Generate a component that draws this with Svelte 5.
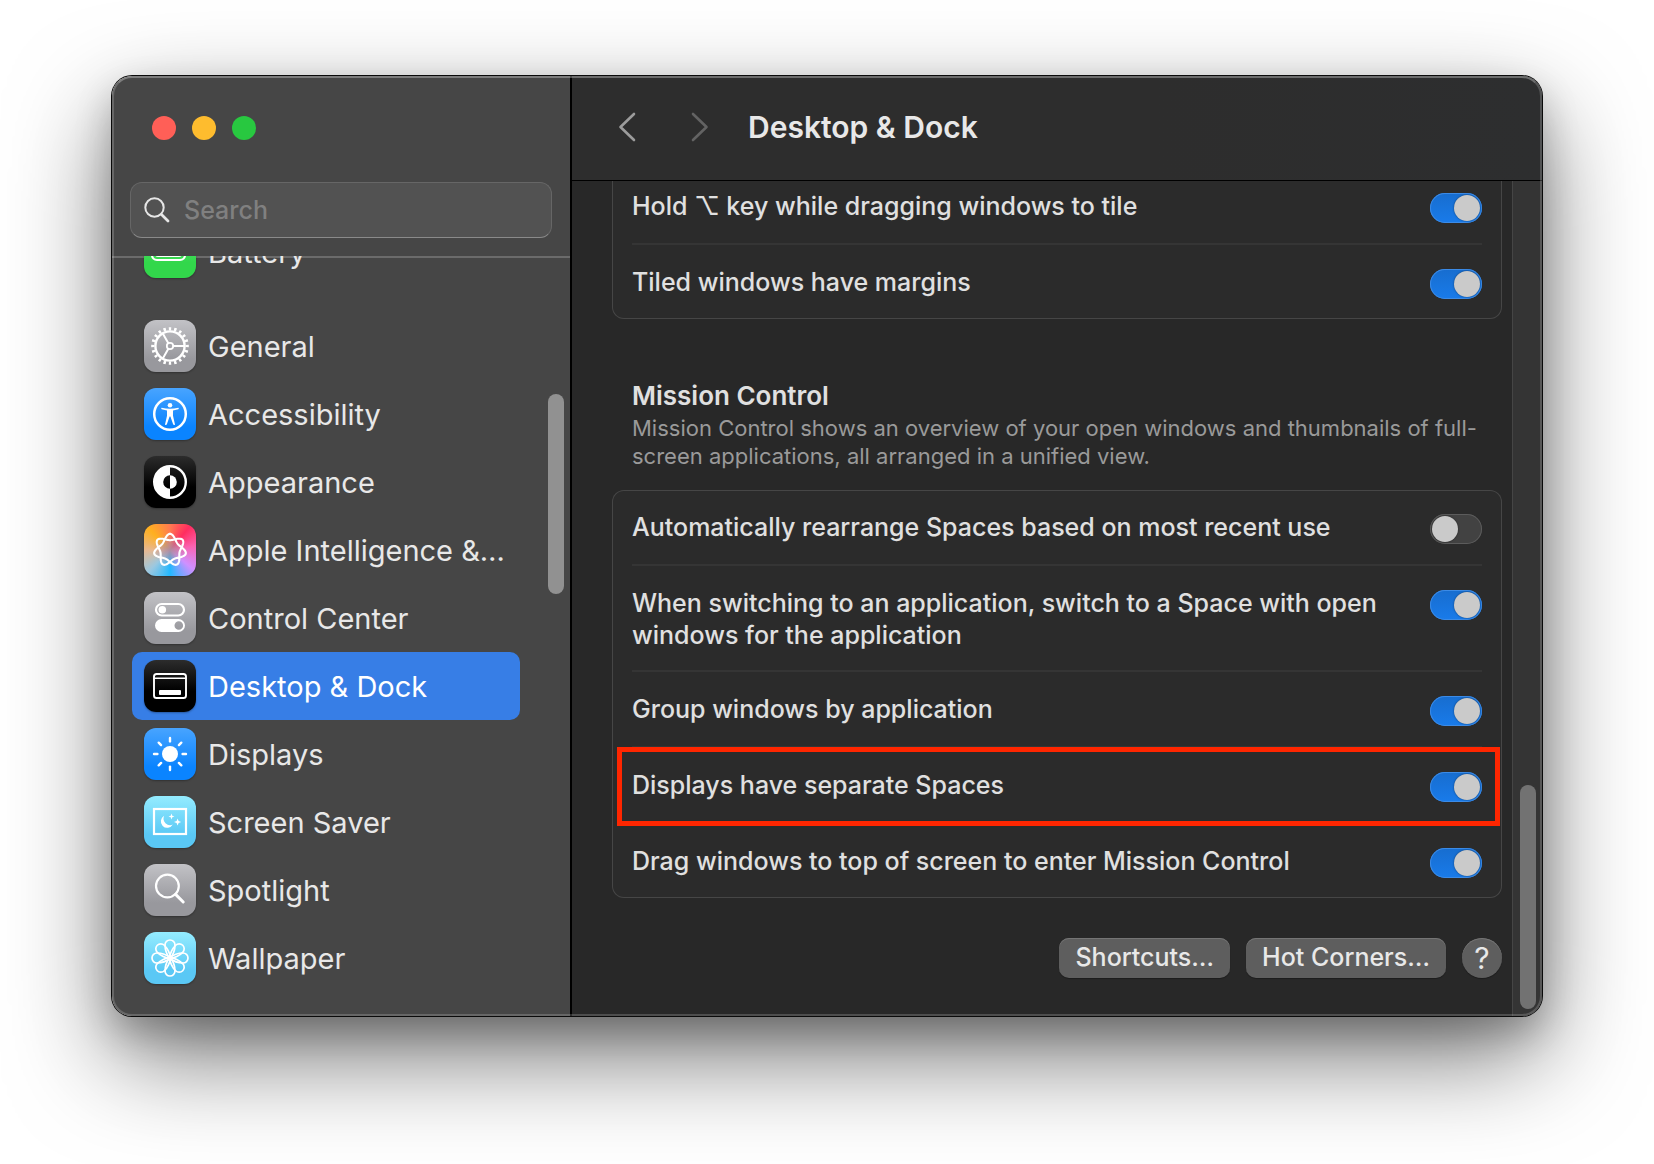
<script>
  let search = "";
  let selected = "dock";

  const sidebar = [
    { id: "battery", label: "Battery", tint: "green" },
    { id: "general", label: "General", tint: "gray", spaced: true },
    { id: "accessibility", label: "Accessibility", tint: "blue" },
    { id: "appearance", label: "Appearance", tint: "black" },
    { id: "siri", label: "Apple Intelligence &…", tint: "rainbow" },
    { id: "control", label: "Control Center", tint: "gray" },
    { id: "dock", label: "Desktop & Dock", tint: "black" },
    { id: "displays", label: "Displays", tint: "blue" },
    { id: "saver", label: "Screen Saver", tint: "cyan" },
    { id: "spotlight", label: "Spotlight", tint: "gray" },
    { id: "wallpaper", label: "Wallpaper", tint: "cyan" },
  ];

  let tiling = [
    { id: "option-tile", label: "Hold ⌥ key while dragging windows to tile", on: true },
    { id: "margins", label: "Tiled windows have margins", on: true },
  ];

  let mission = [
    { id: "rearrange", label: "Automatically rearrange Spaces based on most recent use", on: false },
    { id: "switching", label: "When switching to an application, switch to a Space with open windows for the application", on: true },
    { id: "group", label: "Group windows by application", on: true },
    { id: "separate", label: "Displays have separate Spaces", on: true, marked: true },
    { id: "drag", label: "Drag windows to top of screen to enter Mission Control", on: true },
  ];

  const petals = [0, 45, 90, 135, 180, 225, 270, 315];

  // seven lobed knot that runs twice round the centre
  function knot() {
    const points = [];
    for (let i = 0; i < 210; i++) {
      const t = (i / 210) * Math.PI * 2;
      const r = 13 + 3.2 * Math.cos(7 * t);
      const a = 2 * t - Math.PI / 2 - 0.1 * Math.sin(7 * t);
      points.push((26 + r * Math.cos(a)).toFixed(2) + " " + (26 + r * Math.sin(a)).toFixed(2));
    }
    return "M" + points.join("L") + "Z";
  }
</script>

<div class="window">
  <aside>
    <div class="lights">
      <button class="light close" aria-label="Close"></button>
      <button class="light minimize" aria-label="Minimize"></button>
      <button class="light zoom" aria-label="Zoom"></button>
    </div>

    <label class="search">
      <svg viewBox="0 0 26 26" aria-hidden="true">
        <circle cx="10.5" cy="10.5" r="9.2" />
        <path d="M17.5 17.5L24 24" stroke-width="2.8" />
      </svg>
      <input type="text" placeholder="Search" aria-label="Search" bind:value={search} />
    </label>

    <nav>
      {#each sidebar as item}
        <a
          href="#{item.id}"
          class:selected={selected === item.id}
          class:spaced={item.spaced}
          on:click={() => (selected = item.id)}
        >
          <svg class="icon {item.tint}" viewBox="0 0 52 52" aria-hidden="true">
            {#if item.id === "battery"}
              <rect x="8" y="17" width="33" height="17" rx="5" />
              <rect class="fill" x="11" y="20" width="27" height="11" rx="3" />
              <path d="M44 23v5" />
            {:else if item.id === "general"}
              <circle cx="26" cy="26" r="14.6" stroke-width="2.4" />
              <circle cx="26" cy="26" r="17.2" stroke-width="3.2" pathLength="40" stroke-dasharray="0.9 1.1" stroke-dashoffset="0.45" stroke-linecap="butt" />
              <circle cx="26" cy="26" r="3.2" stroke-width="1.8" />
              <path d="M29.5 26H40M24.2 23L18.8 13.6M24.2 29L18.8 38.4" stroke-width="2" />
            {:else if item.id === "accessibility"}
              <circle cx="26" cy="26" r="15.8" stroke-width="2.5" />
              <circle class="fill" cx="26" cy="17.2" r="2.3" />
              <path class="fill" d="M17.6 19.8q8.4 2 16.8 0q.9.7 0 1.4l-5.4 1.3v5.2l2 8.7q-.8 1.2-1.8.2l-2.8-8.2h-.8l-2.8 8.2q-1 1-1.8-.2l2-8.7v-5.2l-5.4-1.3q-.9-.7 0-1.4z" />
            {:else if item.id === "appearance"}
              <circle cx="26" cy="26" r="15.8" stroke-width="2.4" />
              <path class="fill" d="M26 10a16 16 0 0 0 0 32v-9.2a6.8 6.8 0 0 1 0-13.6z" />
              <path class="fill" d="M26 19.2a6.8 6.8 0 0 1 0 13.6z" />
            {:else if item.id === "siri"}
              <path d={knot()} stroke-width="2.1" />
            {:else if item.id === "control"}
              <rect x="12" y="12" width="28" height="11.5" rx="5.7" />
              <circle class="fill" cx="18.3" cy="17.7" r="3.8" />
              <path class="fill" fill-rule="evenodd" d="M17.5 27h17a6.5 6.5 0 0 1 0 13h-17a6.5 6.5 0 0 1 0-13zM34.8 29.2a4.3 4.3 0 1 0 0 8.6a4.3 4.3 0 1 0 0-8.6z" />
            {:else if item.id === "dock"}
              <rect x="10" y="14" width="32" height="24" rx="2.6" stroke-width="1.9" />
              <path d="M10 18.2h32" stroke-width="1.6" />
              <rect class="fill" x="15" y="30" width="22" height="5" rx="1" />
            {:else if item.id === "displays"}
              <circle class="fill" cx="26" cy="26" r="8" />
              {#each petals as angle}
                <path d="M26 10v3.4" stroke-width="2.4" transform="rotate({angle} 26 26)" />
              {/each}
            {:else if item.id === "saver"}
              <rect x="10" y="13" width="32" height="25" />
              <path class="fill" d="M20.2 19.8A6.4 6.4 0 1 0 28.8 28.6A6.6 6.6 0 0 1 20.2 19.8z" />
              <path class="fill" d="M27.5 17.5l.8 2.2 2.2.8-2.2.8-.8 2.2-.8-2.2-2.2-.8 2.2-.8zM33.6 22.4l1 2.6 2.6 1-2.6 1-1 2.6-1-2.6-2.6-1 2.6-1z" />
            {:else if item.id === "spotlight"}
              <circle cx="23.4" cy="22" r="11.4" />
              <path d="M31.6 30.4l7.6 7.6" stroke-width="3" />
            {:else if item.id === "wallpaper"}
              {#each petals as angle}
                <path d="M26 27C23 23 21 17.5 21 13A5 5 0 0 1 31 13C31 17.5 29 23 26 27Z" stroke-width="1.7" transform="rotate({angle} 26 26)" />
              {/each}
            {/if}
          </svg>
          <span>{item.label}</span>
        </a>
      {/each}
    </nav>
    <div class="thumb side-thumb"></div>
  </aside>

  <main>
    <header>
      <button class="arrow" aria-label="Back">
        <svg viewBox="0 0 18 30" aria-hidden="true"><path d="M16 2L2.5 15L16 28" /></svg>
      </button>
      <button class="arrow forward" aria-label="Forward" disabled>
        <svg viewBox="0 0 18 30" aria-hidden="true"><path d="M2 2L15.5 15L2 28" /></svg>
      </button>
      <h1>Desktop &amp; Dock</h1>
    </header>

    <div class="body">
      <div class="content">
        <section class="card">
          {#each tiling as row}
            <div class="row">
              <label for={row.id}>{row.label}</label>
              <input id={row.id} type="checkbox" role="switch" bind:checked={row.on} />
            </div>
          {/each}
        </section>

        <div class="intro">
          <h2>Mission Control</h2>
          <p>Mission Control shows an overview of your open windows and thumbnails of full-screen applications, all arranged in a unified view.</p>
        </div>

        <section class="card">
          {#each mission as row}
            <div class="row" class:marked={row.marked}>
              <label for={row.id}>{row.label}</label>
              <input id={row.id} type="checkbox" role="switch" bind:checked={row.on} />
            </div>
          {/each}
        </section>

        <div class="actions">
          <button>Shortcuts…</button>
          <button>Hot Corners…</button>
          <button class="help" aria-label="Help">?</button>
        </div>
      </div>
      <div class="track">
        <div class="thumb"></div>
      </div>
    </div>
  </main>
</div>

<style>
:global(body) {
  background: #fff;
}

.window {
  position: relative;
  display: flex;
  box-sizing: border-box;
  height: calc(100vh - 224px);
  margin: 76px 112px 148px;
  border-radius: 20px;
  color: #e0e0e0;
  font-family: Inter, "DejaVu Sans", sans-serif;
  box-shadow: 0 0 0 1px #0a0a0a, 0 40px 100px rgba(0, 0, 0, 0.55), 0 16px 36px rgba(0, 0, 0, 0.22);
}

/* light rim on top of everything */
.window::after {
  content: "";
  position: absolute;
  inset: 0;
  border: 2px solid rgba(255, 255, 255, 0.18);
  border-top-color: rgba(255, 255, 255, 0.3);
  border-radius: 20px;
  pointer-events: none;
}

button {
  padding: 0;
  border: none;
  background: none;
  color: inherit;
  font: inherit;
}

/* Sidebar */
aside {
  position: relative;
  display: flex;
  flex-direction: column;
  flex: 0 0 458px;
  min-width: 0;
  min-height: 0;
  background: #464646;
  border-right: 2px solid #000;
  border-radius: 20px 0 0 20px;
}

.lights {
  display: flex;
  gap: 16px;
  padding: 40px 40px 42px;
}

.light {
  width: 24px;
  height: 24px;
  border-radius: 50%;
}

.close { background: #ff5f57; }
.minimize { background: #febc2e; }
.zoom { background: #28c840; }

.search {
  display: flex;
  align-items: center;
  gap: 14px;
  box-sizing: border-box;
  height: 56px;
  margin: 0 18px 18px;
  padding: 0 13px;
  border: 1px solid #666;
  border-bottom-color: #8a8a8a;
  border-radius: 12px;
  background: #525252;
}

.search svg {
  flex: none;
  width: 26px;
  height: 26px;
  fill: none;
  stroke: #e6e6e6;
  stroke-width: 2;
  stroke-linecap: round;
}

.search input {
  flex: 1;
  min-width: 0;
  padding: 0;
  border: none;
  outline: none;
  background: none;
  color: #e6e6e6;
  font: 500 25px Inter, sans-serif;
}

.search input::placeholder {
  color: #808080;
}

nav {
  display: flex;
  flex: 1;
  flex-direction: column;
  justify-content: flex-end;
  min-height: 0;
  padding: 0 50px 24px 20px;
  overflow: hidden;
  box-shadow: inset 0 2px #6b6b6b;
}

nav a {
  display: flex;
  flex: none;
  align-items: center;
  gap: 12px;
  height: 68px;
  padding: 0 12px;
  border-radius: 10px;
  color: #e8e8e8;
  font-size: 29px;
  text-decoration: none;
  white-space: nowrap;
}

nav a.spaced {
  margin-top: 26px;
}

nav a.selected {
  background: #377ee6;
  color: #fff;
}

.icon {
  flex: none;
  width: 52px;
  height: 52px;
  border-radius: 12px;
  box-shadow: 0 1px 2px rgba(0, 0, 0, 0.3);
  fill: none;
  stroke: #fff;
  stroke-width: 2.2;
  stroke-linecap: round;
}

.icon .fill {
  fill: #fff;
  stroke: none;
}

.green { background: linear-gradient(#66e577, #32d74b 70%); }
.gray { background: linear-gradient(#c2c2c6, #98989d 75%); }
.blue { background: linear-gradient(#48a4ff, #0a84ff 75%); }
.black { background: linear-gradient(#2c2c2c, #000 60%); }
.cyan { background: linear-gradient(#94ecff, #5ac8f5 75%); }

.rainbow {
  background:
    radial-gradient(circle at 50% 50%, #b08ca0 0, rgba(176, 140, 160, 0) 45%),
    conic-gradient(from 0deg at 50% 50%, #ff7a50, #ff2d60 40deg, #fb62b0 80deg, #cf90ff 130deg, #22b8ff 180deg, #9cc8e0 225deg, #e8b890 270deg, #ffb020 315deg, #ff7a50);
}

.thumb {
  width: 16px;
  border-radius: 8px;
  background: #727272;
}

.side-thumb {
  position: absolute;
  top: 318px;
  right: 6px;
  height: 200px;
  background: #919191;
}

/* Detail pane */
main {
  display: flex;
  flex: 1;
  flex-direction: column;
  min-width: 0;
  background: #282828;
  border-radius: 0 20px 20px 0;
}

header {
  display: flex;
  flex: none;
  align-items: center;
  box-sizing: border-box;
  height: 105px;
  padding: 0 46px 2px;
  border-bottom: 1px solid #000;
  border-top-right-radius: 20px;
  background: linear-gradient(90deg, #2d2d2d 60%, #2d2e2f);
}

.arrow {
  width: 18px;
  height: 30px;
  margin-right: 55px;
}

.arrow.forward {
  margin-right: 39px;
}

.arrow svg {
  display: block;
  fill: none;
  stroke: #9c9c9c;
  stroke-width: 2.6;
  stroke-linecap: round;
  stroke-linejoin: round;
}

.arrow.forward svg {
  stroke: #636363;
}

h1 {
  margin: 0;
  color: #e8e8e8;
  font-size: 30px;
  font-weight: 600;
}

.body {
  display: flex;
  flex: 1;
  min-height: 0;
}

.content {
  display: flex;
  flex: 1;
  flex-direction: column;
  justify-content: flex-end;
  min-width: 0;
  padding: 0 10px 38px 40px;
  overflow: hidden;
}

.card {
  flex: none;
  padding: 0 20px;
  border-radius: 12px;
  background: #2b2b2b;
  box-shadow: inset 0 0 0 1px #464646;
}

.row {
  position: relative;
  display: flex;
  align-items: flex-start;
  justify-content: space-between;
  gap: 40px;
  box-sizing: border-box;
  min-height: 74px;
  padding: 21px 0 19px;
}

.row + .row {
  min-height: 76px;
  border-top: 2px solid #353535;
}

.row label {
  font-size: 25px;
  font-weight: 500;
  line-height: 32px;
}

.row.marked::before {
  content: "";
  position: absolute;
  z-index: 1;
  inset: -1px -18px -4px -15px;
  border: 5px solid #ff2600;
  pointer-events: none;
}

.row input {
  position: relative;
  flex: none;
  appearance: none;
  width: 52px;
  height: 30px;
  margin: 3px 0 0;
  border-radius: 15px;
  background: #424242;
  box-shadow: inset 0 0 0 1px #5c5c5c;
}

.row input::before {
  content: "";
  position: absolute;
  top: 2px;
  left: 2px;
  width: 26px;
  height: 26px;
  border-radius: 50%;
  background: #cacaca;
  box-shadow: 0 0 2px rgba(0, 0, 0, 0.5);
}

.row input:checked {
  background: linear-gradient(#176dcf, #197bea);
  box-shadow: inset 0 0 0 1px #3c8be6;
}

.row input:checked::before {
  left: 24px;
}

.intro {
  flex: none;
  padding: 61px 20px 20px;
}

h2 {
  margin: 0 0 2px;
  font-size: 26px;
  font-weight: 600;
  line-height: 32px;
}

p {
  margin: 0;
  color: #9a9a9a;
  font-size: 22px;
  line-height: 28px;
}

.actions {
  display: flex;
  flex: none;
  justify-content: flex-end;
  gap: 16px;
  padding-top: 40px;
}

.actions button {
  height: 40px;
  padding: 0 16px 2px;
  border-radius: 10px;
  background: #5e5e5e;
  box-shadow: inset 0 1px #757575, 0 1px 1px rgba(0, 0, 0, 0.3);
  color: #e8e8e8;
  font-size: 25px;
  font-weight: 500;
}

.actions .help {
  width: 40px;
  padding: 0;
  border-radius: 50%;
  font-size: 30px;
  font-weight: 400;
}

.track {
  display: flex;
  flex: 0 0 30px;
  align-items: flex-end;
  justify-content: center;
  box-sizing: border-box;
  padding: 0 0 7px;
  border-left: 1px solid #454545;
  border-bottom-right-radius: 20px;
  background: #343434;
}

.track .thumb {
  height: 224px;
}
</style>
